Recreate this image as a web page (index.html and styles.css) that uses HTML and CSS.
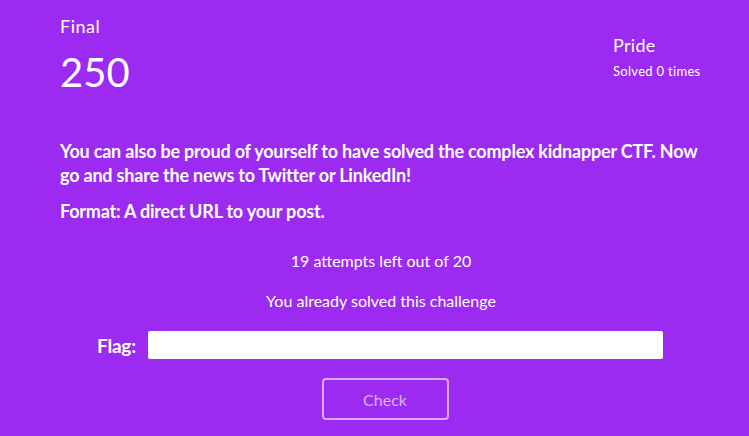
FILE: index.html
```html
<!DOCTYPE html>
<html>
<head>
<meta charset="utf-8">
<link rel="stylesheet" href="styles.css">
</head>
<body>
<div class="page">
  <div class="header">
    <div class="left">
      <div class="category">Final</div>
      <div class="points">250</div>
    </div>
    <div class="right">
      <div class="name">Pride</div>
      <div class="solves">Solved 0 times</div>
    </div>
  </div>
  <div class="desc">
    <p>You can also be proud of yourself to have solved the complex kidnapper CTF. Now go and share the news to Twitter or LinkedIn!</p>
    <p>Format: A direct URL to your post.</p>
  </div>
  <div class="status">
    <p>19 attempts left out of 20</p>
    <p>You already solved this challenge</p>
  </div>
  <div class="flag-row">
    <label class="flag-label">Flag:</label>
    <input class="flag-input" type="text">
  </div>
  <div class="btn-row">
    <button class="check">Check</button>
  </div>
</div>
</body>
</html>
```

FILE: styles.css
```css
html, body {
  margin: 0;
  padding: 0;
  background: #9c2af0;
  height: 100%;
  overflow: hidden;
}
body {
  font-family: Lato, "Liberation Sans", sans-serif;
  color: #fff;
}
.page {
  padding: 0 50px 0 60px;
}
.header {
  display: flex;
  justify-content: space-between;
  padding-top: 14px;
}
.category {
  font-size: 18px;
  line-height: 24px;
  letter-spacing: 0.5px;
}
.points {
  font-size: 40px;
  line-height: 48px;
  margin-top: 10px;
}
.right {
  padding-top: 19px;
  width: 90px;
  margin-right: -4px;
}
.name {
  font-size: 18px;
  line-height: 24px;
  letter-spacing: 0.3px;
}
.solves {
  font-size: 13px;
  line-height: 16px;
  margin-top: 6px;
  letter-spacing: 0.3px;
}
.desc {
  margin-top: 43px;
  font-weight: bold;
  font-size: 18px;
  line-height: 24px;
  letter-spacing: -0.2px;
}
.desc p {
  margin: 0 0 12px 0;
}
.status {
  text-align: center;
  font-size: 16px;
  line-height: 20px;
  margin-top: 28px;
  margin-right: -3px;
}
.status p {
  margin: 0 0 20px 0;
}
.flag-row {
  display: flex;
  align-items: center;
  margin-top: 19px;
  padding-left: 37px;
}
.flag-label {
  font-weight: bold;
  font-size: 19px;
  letter-spacing: -0.2px;
  width: 51px;
}
.flag-input {
  width: 515px;
  height: 28px;
  box-sizing: border-box;
  border: none;
  border-radius: 2px;
  background: #fff;
  margin: 0;
}
.btn-row {
  display: flex;
  justify-content: center;
  margin-top: 19px;
  margin-right: -11px;
}
.check {
  width: 127px;
  height: 42px;
  background: transparent;
  border: 2px solid rgba(255,255,255,0.6);
  border-radius: 4px;
  color: #d9b3f7;
  font-family: Lato, "Liberation Sans", sans-serif;
  font-size: 16px;
}
```
